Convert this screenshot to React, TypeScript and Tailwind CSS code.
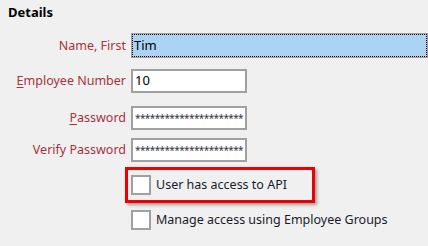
import React from "react";

const font = { fontFamily: '"Noto Sans", "Open Sans", sans-serif' };

function Label({ children }: { children: React.ReactNode }) {
  return (
    <div className="w-[126px] text-right text-[12.5px] leading-[18px] text-[#a8323e] whitespace-nowrap">
      {children}
    </div>
  );
}

function Box({ children }: { children?: React.ReactNode }) {
  return (
    <div className="w-[116px] h-[24px] border-2 border-[#a0a0a0] bg-white flex items-center pl-[2px] overflow-hidden text-[13px] text-black whitespace-nowrap">
      {children}
    </div>
  );
}

function Stars() {
  return (
    <span className="text-[10px] leading-[10px] tracking-[-0.6px] text-[#333344]">
      {"**********************"}
    </span>
  );
}

function Check() {
  return <div className="w-[20px] h-[20px] border-2 border-[#a0a0a0] bg-white shrink-0" />;
}

export default function App() {
  return (
    <div className="w-[428px] h-[246px] bg-[#f0f0f0] overflow-hidden flex flex-col" style={font}>
      <div className="pl-[8px] pt-[3px] font-bold text-[13px] leading-[18px] text-black">Details</div>

      <div className="mt-[12px] flex items-center gap-[5px]">
        <Label>Name, First</Label>
        <div className="w-[297px] h-[25px] border border-[#a0a0a0] bg-[#abd4f4]">
          <div className="w-full h-full border border-dotted border-black flex items-center pl-[1px] text-[13px] text-black">
            Tim
          </div>
        </div>
      </div>

      <div className="mt-[11px] flex items-center gap-[5px]">
        <Label>
          <span className="underline underline-offset-2">E</span>mployee Number
        </Label>
        <Box>10</Box>
      </div>

      <div className="mt-[13px] flex items-center gap-[5px]">
        <Label>
          <span className="underline underline-offset-2">P</span>assword
        </Label>
        <Box>
          <Stars />
        </Box>
      </div>

      <div className="mt-[8px] flex items-center gap-[5px]">
        <Label>Verify Password</Label>
        <Box>
          <Stars />
        </Box>
      </div>

      <div className="mt-[5px] ml-[125px] w-[190px] h-[36px] border-[3px] border-[#ee0000] shadow-[2px_2px_3px_rgba(0,0,0,0.35)] flex items-center pl-[3px] gap-[5px]">
        <Check />
        <span className="text-[12.5px] leading-[18px] text-[#1a1a2a] whitespace-nowrap">User has access to API</span>
      </div>

      <div className="mt-[7px] ml-[131px] flex items-center gap-[5px]">
        <Check />
        <span className="text-[12.5px] leading-[18px] text-[#1a1a2a] whitespace-nowrap">
          Manage access using Employee Groups
        </span>
      </div>
    </div>
  );
}
